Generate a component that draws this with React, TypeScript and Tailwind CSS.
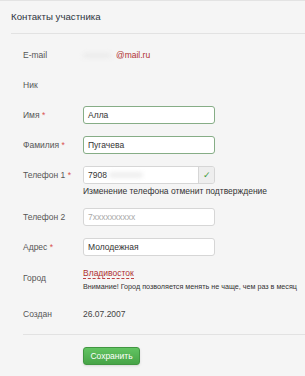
import React from 'react';

const font = { fontFamily: '"Liberation Sans", Arial, sans-serif' };

function Label({ text, required = false }: { text: string; required?: boolean }) {
  return (
    <div className="w-[60px] shrink-0 text-[8.5px] leading-[12px] text-[#555]">
      {text}
      {required && <span className="text-[#d9534f]"> *</span>}
    </div>
  );
}

function Field({ value, placeholder, green = false }: { value?: string; placeholder?: string; green?: boolean }) {
  return (
    <div
      className={
        'w-[132px] h-[18px] rounded-[3px] bg-white flex items-center px-[4px] text-[8.5px] ' +
        (green ? 'border border-[#86ad86]' : 'border border-[#d6d6d6]')
      }
    >
      {value ? <span className="text-[#333]">{value}</span> : <span className="text-[#aaa]">{placeholder}</span>}
    </div>
  );
}

export default function App() {
  return (
    <div className="w-[305px] h-[376px] bg-[#f5f5f5] border-t border-[#e3e3e3] overflow-hidden leading-[12px]" style={font}>
      <div className="pl-[11px]">
        <div className="h-[32px] flex items-center text-[9.7px] text-[#2d3440]">Контакты участника</div>
        <div className="h-px bg-[#e2e2e2]" />
      </div>

      <div className="pl-[23px] pt-[12px]">
        <div className="flex items-center h-[18px]">
          <Label text="E-mail" />
          <div className="text-[8.5px] flex items-center">
            <span className="inline-block w-[28px] h-[5px] rounded-full bg-[#ebebeb] blur-[2px] mr-[5px]" />
            <span className="text-[#b03030]">@mail.ru</span>
          </div>
        </div>

        <div className="flex items-center h-[18px] mt-[12px]">
          <Label text="Ник" />
        </div>

        <div className="flex items-center h-[18px] mt-[12px]">
          <Label text="Имя" required />
          <Field value="Алла" green />
        </div>

        <div className="flex items-center h-[18px] mt-[12px]">
          <Label text="Фамилия" required />
          <Field value="Пугачева" green />
        </div>

        <div className="flex mt-[12px] h-[30px]">
          <div className="h-[18px] flex items-center">
            <Label text="Телефон 1" required />
          </div>
          <div>
            <div className="flex w-[132px] h-[18px] rounded-[3px] border border-[#d6d6d6] overflow-hidden">
              <div className="flex-1 bg-white flex items-center px-[4px] text-[8.5px] text-[#333]">
                7908
                <span className="inline-block w-[34px] h-[6px] rounded-full bg-[#efefef] blur-[2px] ml-[2px]" />
              </div>
              <div className="w-[16px] bg-[#eeeeee] border-l border-[#d6d6d6] flex items-center justify-center text-[9px] text-[#3c9a3c]">
                ✓
              </div>
            </div>
            <div className="text-[8.5px] text-[#333] mt-[2px] leading-[10px] whitespace-nowrap">
              Изменение телефона отменит подтверждение
            </div>
          </div>
        </div>

        <div className="flex items-center h-[18px] mt-[12px]">
          <Label text="Телефон 2" />
          <Field placeholder="7xxxxxxxxxx" />
        </div>

        <div className="flex items-center h-[18px] mt-[12px]">
          <Label text="Адрес" required />
          <Field value="Молодежная" />
        </div>

        <div className="flex items-start h-[24px] mt-[12px]">
          <div className="pt-[4px]">
            <Label text="Город" />
          </div>
          <div>
            <div className="h-[12px] text-[8.5px] text-[#b03030] leading-[11px]">
              <span className="border-b border-dashed border-[#c04040]">Владивосток</span>
            </div>
            <div className="text-[7.2px] text-[#333] leading-[10px] mt-[2px] whitespace-nowrap">
              Внимание! Город позволяется менять не чаще, чем раз в месяц
            </div>
          </div>
        </div>

        <div className="flex items-center h-[18px] mt-[13px]">
          <Label text="Создан" />
          <div className="text-[8.5px] text-[#444]">26.07.2007</div>
        </div>

        <div className="h-px bg-[#e2e2e2] mt-[11px]" />

        <div className="pl-[60px] mt-[12px]">
          <button className="h-[18px] w-[57px] rounded-[3px] bg-gradient-to-b from-[#62c462] to-[#47a447] border border-[#419641] text-white text-[8.5px] leading-[12px] shadow-sm">
            Сохранить
          </button>
        </div>
      </div>
    </div>
  );
}
